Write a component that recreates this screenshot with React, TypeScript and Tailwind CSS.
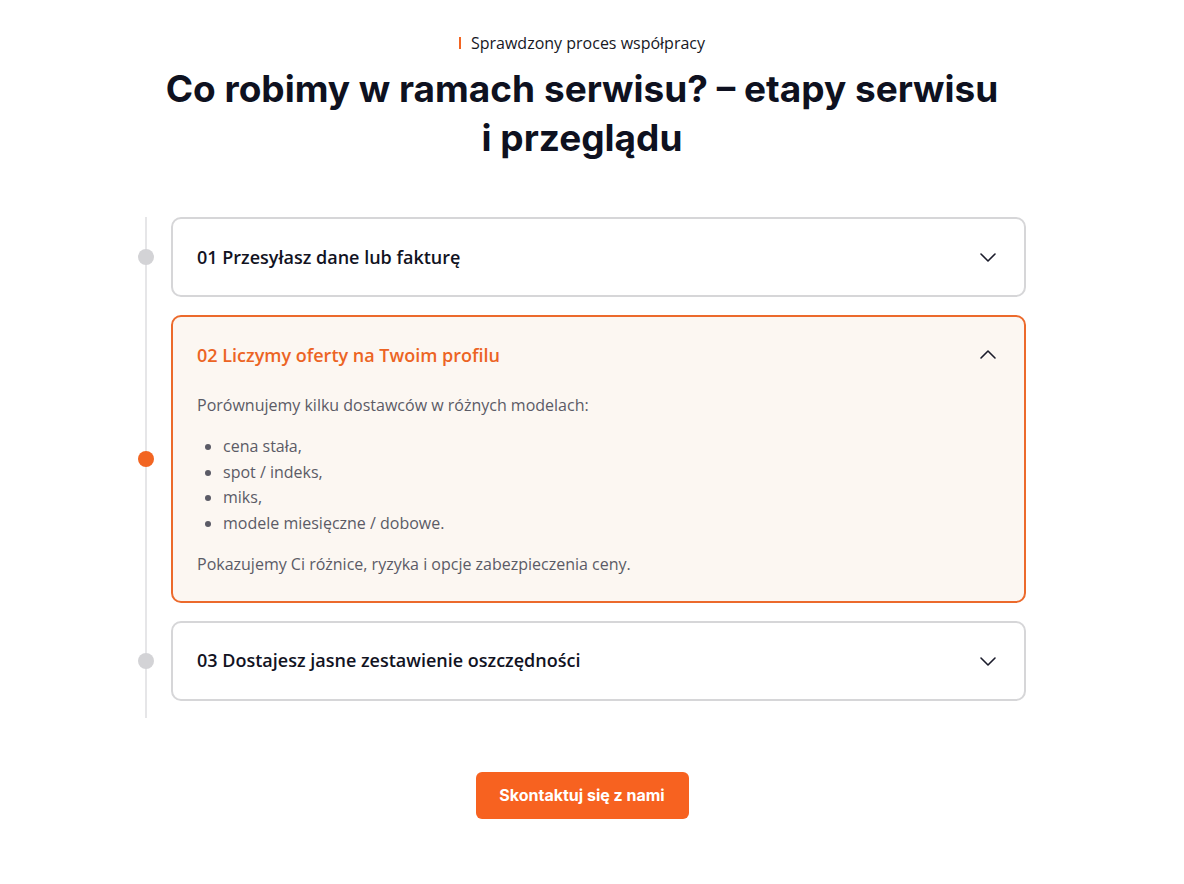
import { useState } from "react";

type Step = {
    id: string;
    title: string;
    intro?: string;
    points?: string[];
    outro?: string;
};

const steps: Step[] = [
    {
        id: "01",
        title: "Przesyłasz dane lub fakturę",
        intro: "Analizujemy Twoje zużycie, taryfę i warunki obecnej umowy.",
    },
    {
        id: "02",
        title: "Liczymy oferty na Twoim profilu",
        intro: "Porównujemy kilku dostawców w różnych modelach:",
        points: [
            "cena stała,",
            "spot / indeks,",
            "miks,",
            "modele miesięczne / dobowe.",
        ],
        outro: "Pokazujemy Ci różnice, ryzyka i opcje zabezpieczenia ceny.",
    },
    {
        id: "03",
        title: "Dostajesz jasne zestawienie oszczędności",
        intro: "Otrzymujesz raport z rekomendacją i wyliczeniem oszczędności.",
    },
];

function Chevron({ up }: { up?: boolean }) {
    return (
        <svg
            width="24"
            height="24"
            viewBox="0 0 24 24"
            fill="none"
            stroke="#1b1c2b"
            strokeWidth="1.6"
            strokeLinecap="round"
            strokeLinejoin="round"
            className={up ? "rotate-180" : ""}
        >
            <path d="M5 9l7 7 7-7" />
        </svg>
    );
}

export default function App() {
    const [open, setOpen] = useState("02");

    return (
        <div className="min-h-[884px] bg-white font-['Open_Sans',sans-serif]">
            <div className="w-[1164px] flex flex-col items-center pt-[32px]">
                {/* Kicker */}
                <div className="flex items-center gap-[10px] text-[16px] leading-[22px] text-[#17181f]">
                    <span className="block w-[2px] h-[12px] bg-[#f26522]" />
                    <span>Sprawdzony proces współpracy</span>
                </div>

                {/* Heading */}
                <h1 className="mt-[10px] text-center font-['Inter',sans-serif] text-[37px] leading-[49px] font-bold text-[#0e1120]">
                    Co robimy w ramach serwisu? – etapy serwisu
                    <br />i przeglądu
                </h1>

                {/* Timeline */}
                <div className="relative mt-[55px] w-[888px] pb-[17px]">
                    <div className="absolute left-[7px] top-0 bottom-0 w-[2px] bg-[#e6e6e8]" />
                    <div className="flex flex-col gap-[18px]">
                        {steps.map((step) => {
                            const active = open === step.id;
                            return (
                                <div
                                    key={step.id}
                                    className="relative pl-[33px]"
                                >
                                    <span
                                        className={
                                            active
                                                ? "absolute left-0 top-1/2 -translate-y-1/2 w-[16px] h-[16px] rounded-full bg-[#f26522]"
                                                : "absolute left-0 top-1/2 -translate-y-1/2 w-[16px] h-[16px] rounded-full bg-[#d3d3d6]"
                                        }
                                    />
                                    <div
                                        className={
                                            active
                                                ? "rounded-[10px] border-2 border-[#ec6a2c] bg-[#fcf7f2]"
                                                : "rounded-[10px] border-2 border-[#d6d6d8] bg-white"
                                        }
                                    >
                                        <button
                                            type="button"
                                            onClick={() =>
                                                setOpen(active ? "" : step.id)
                                            }
                                            className="flex w-full h-[76px] items-center justify-between px-[24px] text-left"
                                        >
                                            <span
                                                className={
                                                    active
                                                        ? "text-[18px] font-semibold text-[#ec6424]"
                                                        : "text-[18px] font-semibold text-[#12131f]"
                                                }
                                            >
                                                {step.id} {step.title}
                                            </span>
                                            <Chevron up={active} />
                                        </button>
                                        {active && (
                                            <div className="px-[24px] pb-[23px] text-[16px] leading-[25.8px] text-[#5b5b66]">
                                                <p>{step.intro}</p>
                                                {step.points && (
                                                    <ul className="mt-[15px] list-disc pl-[26px] marker:text-[#5b5b66]">
                                                        {step.points.map(
                                                            (p) => (
                                                                <li key={p}>
                                                                    {p}
                                                                </li>
                                                            ),
                                                        )}
                                                    </ul>
                                                )}
                                                {step.outro && (
                                                    <p className="mt-[15px]">
                                                        {step.outro}
                                                    </p>
                                                )}
                                            </div>
                                        )}
                                    </div>
                                </div>
                            );
                        })}
                    </div>
                </div>

                {/* Call to Action */}
                <button
                    type="button"
                    className="mt-[54px] w-[213px] h-[47px] rounded-[6px] bg-[#f76220] font-['Inter',sans-serif] text-[16px] font-bold text-white"
                >
                    Skontaktuj się z nami
                </button>
            </div>
        </div>
    );
}
